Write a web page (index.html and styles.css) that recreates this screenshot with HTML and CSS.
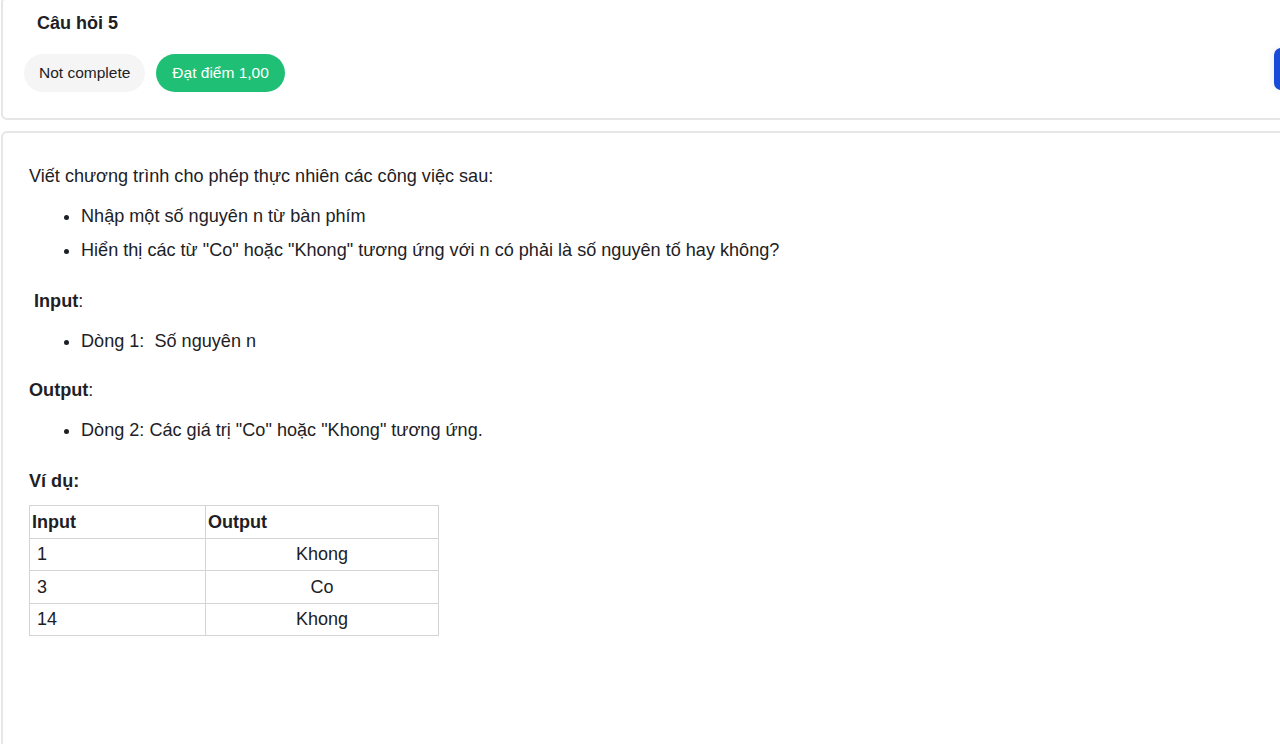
FILE: index.html
```html
<!DOCTYPE html>
<html lang="vi">
<head>
<meta charset="utf-8">
<title>Câu hỏi 5</title>
<link rel="stylesheet" href="styles.css">
</head>
<body>
<div class="page">
  <section class="card head-card">
    <h3 class="qno">Câu hỏi 5</h3>
    <div class="pills">
      <span class="pill pill-state">Not complete</span>
      <span class="pill pill-grade">Đạt điểm 1,00</span>
    </div>
    <span class="side-btn"></span>
  </section>

  <section class="card body-card">
    <p class="lead">Viết chương trình cho phép thực nhiên các công việc sau:</p>
    <ul class="list">
      <li>Nhập một số nguyên n từ bàn phím</li>
      <li>Hiển thị các từ "Co" hoặc "Khong" tương ứng với n có phải là số nguyên tố hay không?</li>
    </ul>
    <p class="label">&nbsp;<strong>Input</strong>:</p>
    <ul class="list list-tight">
      <li>Dòng 1:&nbsp; Số nguyên n</li>
    </ul>
    <p class="label"><strong>Output</strong>:</p>
    <ul class="list">
      <li>Dòng 2: Các giá trị "Co" hoặc "Khong" tương ứng.</li>
    </ul>
    <p class="label"><strong>Ví dụ:</strong></p>
    <table class="sample">
      <thead>
        <tr><th class="c1">Input</th><th class="c2">Output</th></tr>
      </thead>
      <tbody>
        <tr><td class="c1">1</td><td class="c2 ctr">Khong</td></tr>
        <tr><td class="c1">3</td><td class="c2 ctr">Co</td></tr>
        <tr><td class="c1">14</td><td class="c2 ctr">Khong</td></tr>
      </tbody>
    </table>
  </section>
</div>
</body>
</html>
```

FILE: styles.css
```css
html, body {
  margin: 0;
  padding: 0;
  background: #ffffff;
  overflow: hidden;
}
body {
  font-family: "Liberation Sans", Arial, sans-serif;
  color: #1d2125;
}
.page {
  width: 1310px;
  padding-left: 1px;
  display: flex;
  flex-direction: column;
  gap: 11px;
}
.card {
  border: 2px solid #e6e6e6;
  border-radius: 6px;
  background: #fff;
  position: relative;
}
.head-card {
  margin-top: -3px;
  padding: 12px 0 26px 21px;
}
.qno {
  margin: 0 0 0 13px;
  font-size: 18px;
  font-weight: bold;
  line-height: 24px;
}
.pills {
  display: flex;
  gap: 10px;
  margin-top: 19px;
}
.pill {
  display: inline-flex;
  align-items: center;
  height: 38px;
  border-radius: 19px;
  padding: 0 15px;
  font-size: 15.5px;
}
.pill-state {
  background: #f5f5f5;
  color: #1d2125;
}
.pill-grade {
  background: #1fbf75;
  color: #ffffff;
  padding: 0 16px;
  margin-left: 1px;
}
.side-btn {
  position: absolute;
  left: 1271px;
  top: 49px;
  width: 40px;
  height: 42px;
  border-radius: 7px;
  background: #1a4bd6;
  box-shadow: -2px 0 6px rgba(0,0,0,0.06);
}
.body-card {
  padding: 31px 0 140px 26px;
  font-size: 18.1px;
  line-height: 24px;
}
.lead {
  margin: 0 0 16px 0;
}
.list {
  margin: 0 0 27px 0;
  padding-left: 52px;
}
.list-tight {
  margin-bottom: 25px;
}
.list li {
  margin-bottom: 10px;
}
.list li:last-child {
  margin-bottom: 0;
}
.label {
  margin: 0 0 16px 0;
}
.sample {
  border-collapse: collapse;
  width: 410px;
  margin-top: -4px;
}
.sample th, .sample td {
  border: 1px solid #d4d4d4;
  height: 31.5px;
  padding: 0 2px;
  text-align: left;
  font-size: 18px;
}
.sample th {
  font-weight: bold;
}
.sample td.c1 {
  padding-left: 7px;
}
.sample .c1 {
  width: 166px;
}
.sample td.ctr {
  text-align: center;
}
```
